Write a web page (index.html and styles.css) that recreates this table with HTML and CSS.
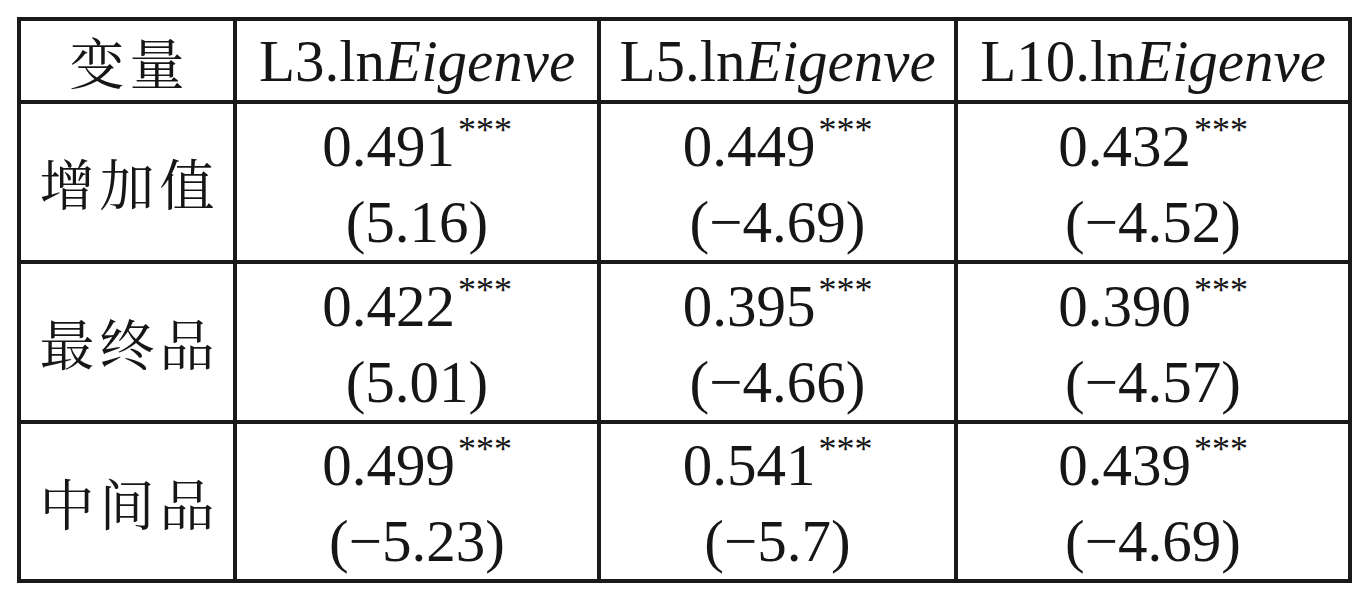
FILE: index.html
```html
<!DOCTYPE html>
<html lang="zh-CN">
<head>
<meta charset="utf-8">
<title>回归结果</title>
<link rel="stylesheet" href="styles.css">
</head>
<body>
<table class="results">
  <colgroup>
    <col class="c-var">
    <col class="c-l3">
    <col class="c-l5">
    <col class="c-l10">
  </colgroup>
  <thead>
    <tr class="head-row">
      <th class="label">变量</th>
      <th class="num">L3.ln<i>Eigenve</i></th>
      <th class="num">L5.ln<i>Eigenve</i></th>
      <th class="num">L10.ln<i>Eigenve</i></th>
    </tr>
  </thead>
  <tbody>
    <tr class="body-row">
      <td class="label">增加值</td>
      <td class="num">0.491<sup class="sig">***</sup><br>(5.16)</td>
      <td class="num">0.449<sup class="sig">***</sup><br>(−4.69)</td>
      <td class="num">0.432<sup class="sig">***</sup><br>(−4.52)</td>
    </tr>
    <tr class="body-row">
      <td class="label">最终品</td>
      <td class="num">0.422<sup class="sig">***</sup><br>(5.01)</td>
      <td class="num">0.395<sup class="sig">***</sup><br>(−4.66)</td>
      <td class="num">0.390<sup class="sig">***</sup><br>(−4.57)</td>
    </tr>
    <tr class="body-row last">
      <td class="label">中间品</td>
      <td class="num">0.499<sup class="sig">***</sup><br>(−5.23)</td>
      <td class="num">0.541<sup class="sig">***</sup><br>(−5.7)</td>
      <td class="num">0.439<sup class="sig">***</sup><br>(−4.69)</td>
    </tr>
  </tbody>
</table>
</body>
</html>
```

FILE: styles.css
```css
html, body {
  margin: 0;
  padding: 0;
  background: #ffffff;
}

body {
  color: #161616;
  font-family: "Liberation Serif", "Times New Roman", serif;
}

.results {
  margin: 17px 0 0 17px;
  border-collapse: separate;
  border-spacing: 0;
  table-layout: fixed;
  width: 1335px;
  border-top: 4px solid #1a1a1a;
  border-left: 4px solid #1a1a1a;
}

.c-var { width: 216px; }
.c-l3 { width: 364px; }
.c-l5 { width: 357px; }
.c-l10 { width: 394px; }

.results th,
.results td {
  box-sizing: border-box;
  border-right: 4px solid #1a1a1a;
  border-bottom: 4px solid #1a1a1a;
  padding: 0;
  text-align: center;
  vertical-align: middle;
  font-weight: normal;
}

.head-row th {
  height: 83px;
}

.body-row td {
  height: 160px;
}

.body-row.last td {
  height: 159px;
}

.num {
  font-family: "Liberation Serif", "Times New Roman", serif;
  font-size: 59px;
  line-height: 68px;
  white-space: nowrap;
}

.body-row .num {
  line-height: 76px;
  padding-top: 4px;
}

.body-row.last .num {
  padding-top: 3px;
}

.num i {
  font-style: italic;
}

.label {
  font-family: "AR PL UKai CN", "KaiTi", "Noto Serif CJK SC", "Noto Sans CJK SC", sans-serif;
  font-size: 55px;
  letter-spacing: 5px;
  text-indent: 5px;
  line-height: 68px;
  white-space: nowrap;
}

.sig {
  font-size: 36px;
  line-height: 0;
  vertical-align: 24px;
  margin-left: 3px;
}
```
